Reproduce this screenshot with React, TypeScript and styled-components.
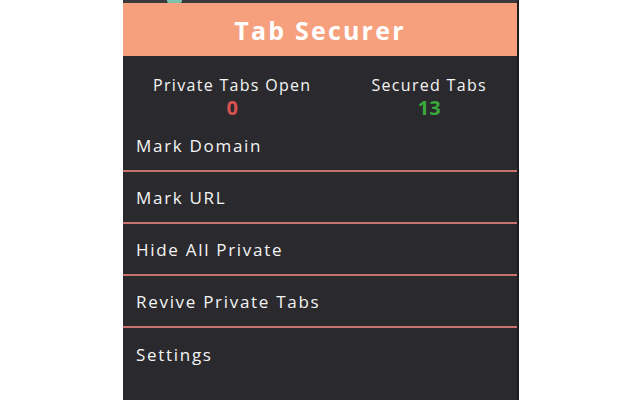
import React from "react";
import styled, { createGlobalStyle } from "styled-components";

const GlobalStyle = createGlobalStyle`
  html, body {
    margin: 0;
    padding: 0;
    background: #ffffff;
    height: 400px;
    overflow: hidden;
  }
  #root {
    height: 400px;
  }
`;

const Page = styled.div`
  display: flex;
  justify-content: flex-start;
  height: 400px;
  padding-left: 123px;
  box-sizing: border-box;
`;

const Popup = styled.div`
  width: 394px;
  height: 400px;
  display: flex;
  flex-direction: column;
  background: #2a2a2e;
  border-right: 2px solid #1e1e20;
  font-family: "Open Sans", "Noto Sans", sans-serif;
  color: #f4f4f4;
`;

const TopStrip = styled.div`
  height: 3px;
  background: #3a3a3d;
  display: flex;
  padding-left: 44px;
`;

const TabNub = styled.span`
  width: 15px;
  height: 3px;
  background: #7cc4ae;
  border-radius: 0 0 2px 2px;
`;

const Header = styled.header`
  height: 53px;
  background: #f6a07e;
  display: flex;
  align-items: center;
  justify-content: center;
`;

const Title = styled.h1`
  margin: 0;
  font-size: 25px;
  font-weight: 700;
  letter-spacing: 2.2px;
  color: #ffffff;
`;

const Stats = styled.section`
  display: flex;
  justify-content: space-around;
  padding-top: 18px;
  height: 64px;
  box-sizing: border-box;
`;

const Stat = styled.div`
  display: flex;
  flex-direction: column;
  align-items: center;
`;

const StatLabel = styled.span`
  font-size: 16px;
  letter-spacing: 1.3px;
  line-height: 22px;
`;

const StatValue = styled.span<{ $color: string }>`
  font-size: 20px;
  font-weight: 700;
  line-height: 24px;
  color: ${(p) => p.$color};
`;

const Menu = styled.nav`
  display: flex;
  flex-direction: column;
`;

const MenuItem = styled.div<{ $last?: boolean }>`
  height: 52px;
  display: flex;
  align-items: center;
  padding-left: 13px;
  font-size: 17px;
  letter-spacing: 1.7px;
  border-bottom: ${(p) => (p.$last ? "none" : "2px solid #c5736c")};
  box-sizing: border-box;
`;

const items = [
  "Mark Domain",
  "Mark URL",
  "Hide All Private",
  "Revive Private Tabs",
  "Settings",
];

export default function App() {
  return (
    <>
      <GlobalStyle />
      <Page>
        <Popup>
          <TopStrip>
            <TabNub />
          </TopStrip>
          <Header>
            <Title>Tab Securer</Title>
          </Header>
          <Stats>
            <Stat>
              <StatLabel>Private Tabs Open</StatLabel>
              <StatValue $color="#d9534f">0</StatValue>
            </Stat>
            <Stat>
              <StatLabel>Secured Tabs</StatLabel>
              <StatValue $color="#3aa83a">13</StatValue>
            </Stat>
          </Stats>
          <Menu>
            {items.map((label, i) => (
              <MenuItem key={label} $last={i === items.length - 1}>
                {label}
              </MenuItem>
            ))}
          </Menu>
        </Popup>
      </Page>
    </>
  );
}
